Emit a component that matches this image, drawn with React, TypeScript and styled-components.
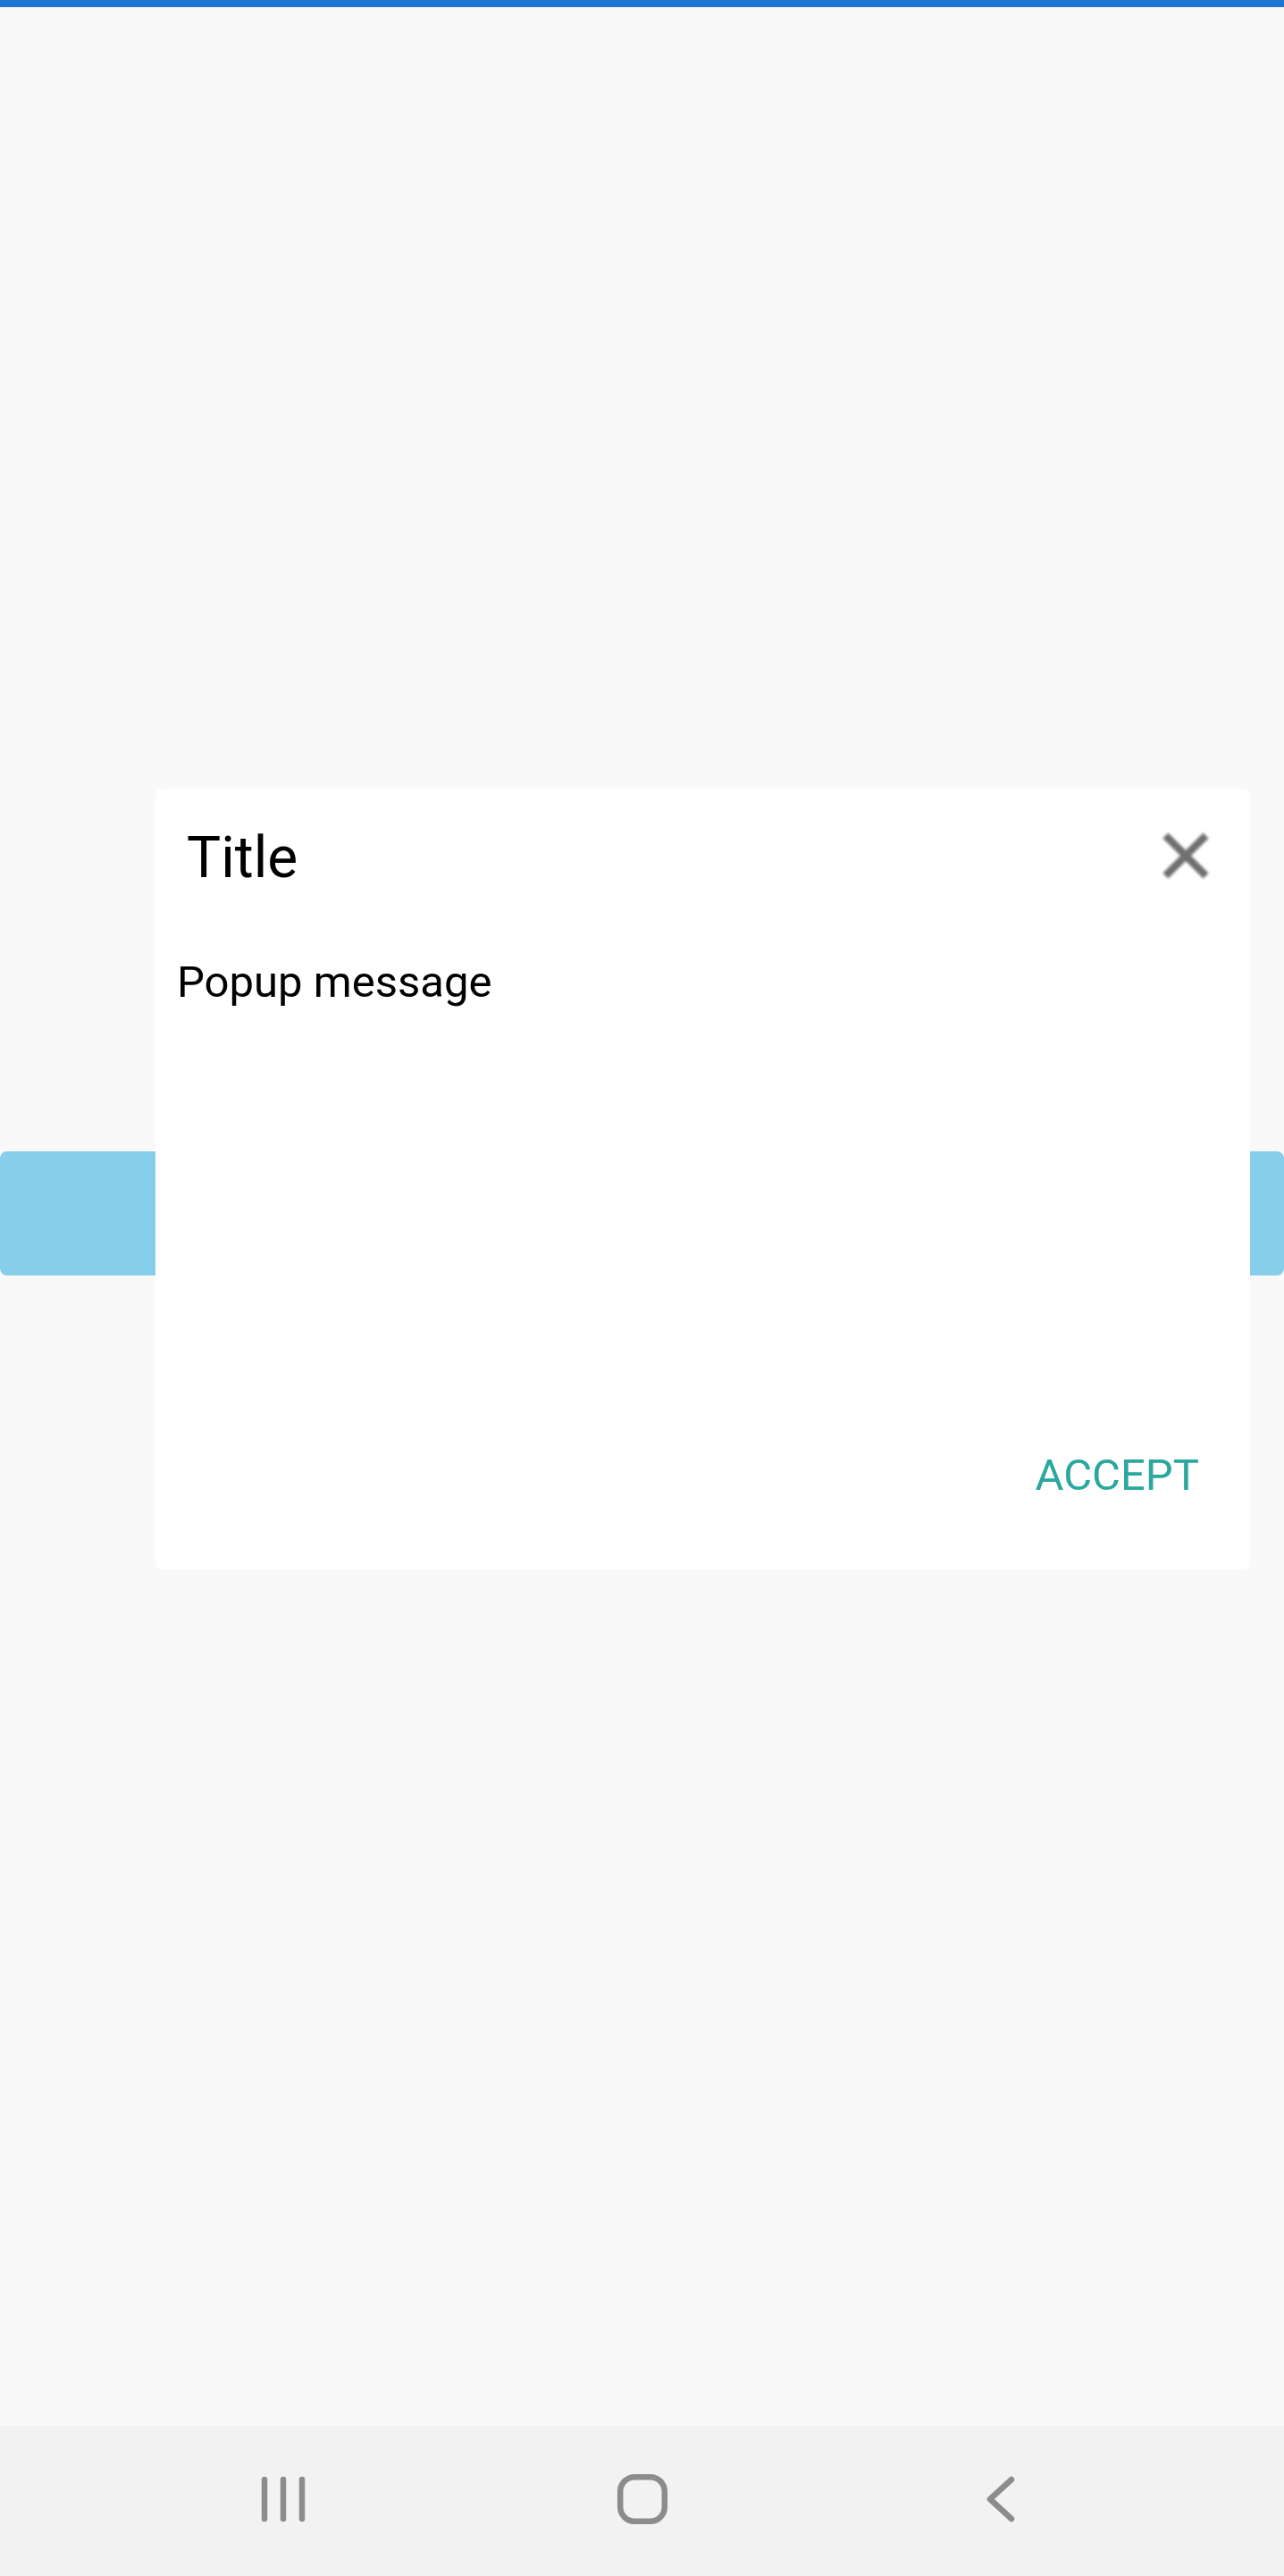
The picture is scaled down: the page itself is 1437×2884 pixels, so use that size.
import React from "react";
import styled, { createGlobalStyle } from "styled-components";

const Global = createGlobalStyle`
  html, body { margin: 0; padding: 0; }
  body { background: #f9f9f9; font-family: Roboto, "Noto Sans", sans-serif; }
`;

const Screen = styled.div`
  position: relative;
  width: 1437px;
  height: 2884px;
  display: flex;
  flex-direction: column;
  background: #f9f9f9;
  overflow: hidden;
`;

const StatusStrip = styled.div`
  height: 8px;
  background: #1c75cf;
  flex: none;
`;

const Content = styled.main`
  flex: 1;
  padding-top: 1281px;
  box-sizing: border-box;
`;

const Band = styled.div`
  height: 139px;
  background: #87ceeb;
  border-radius: 8px;
`;

const NavBar = styled.nav`
  flex: none;
  height: 168px;
  background: #f2f2f2;
  display: flex;
  justify-content: center;
  align-items: center;
  padding-bottom: 4px;
  box-sizing: border-box;
`;

const NavButton = styled.button`
  width: 402px;
  height: 100px;
  display: flex;
  align-items: center;
  justify-content: center;
  background: none;
  border: 0;
  padding: 0;
  color: #8c8c8c;
`;

const Dialog = styled.div`
  position: absolute;
  left: 174px;
  top: 883px;
  width: 1225px;
  height: 874px;
  background: #ffffff;
  border-radius: 8px;
  display: flex;
  flex-direction: column;
  box-sizing: border-box;
`;

const Header = styled.div`
  display: flex;
  align-items: flex-start;
  justify-content: space-between;
  padding: 33px 30px 0 35px;
`;

const Title = styled.h2`
  margin: 0;
  padding-top: 7px;
  font-family: Roboto, sans-serif;
  font-weight: 400;
  font-size: 64px;
  line-height: 76px;
  color: #000000;
`;

const CloseButton = styled.button`
  width: 84px;
  height: 84px;
  padding: 0;
  border: 0;
  background: none;
  color: #707070;
  display: flex;
  svg { filter: blur(1.4px); }
`;

const Message = styled.p`
  margin: 71px 0 0 24px;
  font-family: Roboto, sans-serif;
  font-size: 49px;
  line-height: 58px;
  color: #000000;
`;

const Spacer = styled.div`
  flex: 1;
`;

const Footer = styled.div`
  display: flex;
  justify-content: flex-end;
  padding: 0 57px 76px 0;
`;

const TextButton = styled.button`
  border: 0;
  background: none;
  padding: 0;
  font-family: Roboto, sans-serif;
  font-size: 49px;
  line-height: 58px;
  color: #2aa89e;
  text-transform: uppercase;
`;

export default function App() {
  return (
    <>
      <Global />
      <Screen>
        <StatusStrip />
        <Content>
          <Band />
        </Content>
        <NavBar>
          <NavButton aria-label="Recents">
            <svg width="60" height="60" viewBox="0 0 60 60">
              <g stroke="currentColor" strokeWidth="6.5" strokeLinecap="round">
                <line x1="9" y1="8" x2="9" y2="52" />
                <line x1="30" y1="8" x2="30" y2="52" />
                <line x1="51" y1="8" x2="51" y2="52" />
              </g>
            </svg>
          </NavButton>
          <NavButton aria-label="Home">
            <svg width="60" height="60" viewBox="0 0 60 60">
              <rect x="5.2" y="5.2" width="49.6" height="49.6" rx="16" fill="none" stroke="currentColor" strokeWidth="6.5" />
            </svg>
          </NavButton>
          <NavButton aria-label="Back">
            <svg width="60" height="60" viewBox="0 0 60 60">
              <polyline points="41,8 17,30 41,52" fill="none" stroke="currentColor" strokeWidth="6.5" strokeLinecap="round" strokeLinejoin="round" />
            </svg>
          </NavButton>
        </NavBar>
        <Dialog role="dialog">
          <Header>
            <Title>Title</Title>
            <CloseButton aria-label="Close">
              <svg width="84" height="84" viewBox="0 0 24 24">
                <path fill="currentColor" stroke="currentColor" strokeWidth="0.45" strokeLinejoin="miter" d="M19 6.41L17.59 5 12 10.59 6.41 5 5 6.41 10.59 12 5 17.59 6.41 19 12 13.41 17.59 19 19 17.59 13.41 12z" />
              </svg>
            </CloseButton>
          </Header>
          <Message>Popup message</Message>
          <Spacer />
          <Footer>
            <TextButton>Accept</TextButton>
          </Footer>
        </Dialog>
      </Screen>
    </>
  );
}
